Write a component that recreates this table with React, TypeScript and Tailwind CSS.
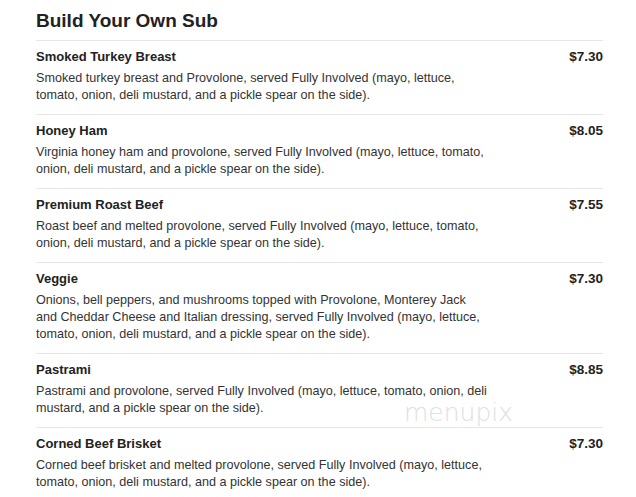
const items = [
  {
    name: "Smoked Turkey Breast",
    price: "$7.30",
    desc: "Smoked turkey breast and Provolone, served Fully Involved (mayo, lettuce, tomato, onion, deli mustard, and a pickle spear on the side).",
  },
  {
    name: "Honey Ham",
    price: "$8.05",
    desc: "Virginia honey ham and provolone, served Fully Involved (mayo, lettuce, tomato, onion, deli mustard, and a pickle spear on the side).",
  },
  {
    name: "Premium Roast Beef",
    price: "$7.55",
    desc: "Roast beef and melted provolone, served Fully Involved (mayo, lettuce, tomato, onion, deli mustard, and a pickle spear on the side).",
  },
  {
    name: "Veggie",
    price: "$7.30",
    desc: "Onions, bell peppers, and mushrooms topped with Provolone, Monterey Jack and Cheddar Cheese and Italian dressing, served Fully Involved (mayo, lettuce, tomato, onion, deli mustard, and a pickle spear on the side).",
  },
  {
    name: "Pastrami",
    price: "$8.85",
    desc: "Pastrami and provolone, served Fully Involved (mayo, lettuce, tomato, onion, deli mustard, and a pickle spear on the side).",
  },
  {
    name: "Corned Beef Brisket",
    price: "$7.30",
    desc: "Corned beef brisket and melted provolone, served Fully Involved (mayo, lettuce, tomato, onion, deli mustard, and a pickle spear on the side).",
  },
];

export default function App() {
  return (
    <div
      className="relative bg-white w-[636px] h-[497px] overflow-hidden pl-[36px] pr-[33px] text-[#333]"
      style={{ fontFamily: '"Liberation Sans", Arial, sans-serif' }}
    >
      <h2 className="pt-[9px] mb-[7px] text-[19px] leading-[24px] font-bold text-[#222]">
        Build Your Own Sub
      </h2>

      {items.map((item) => (
        <div key={item.name} className="border-t border-[#e6e6e6] pt-[8px] pb-[10px]">
          {/* name + price */}
          <div className="flex justify-between items-start">
            <h3 className="text-[13px] leading-[16px] font-bold text-[#222]">{item.name}</h3>
            <span className="text-[13.5px] leading-[16px] font-bold text-[#222]">{item.price}</span>
          </div>
          <p className="mt-[5px] max-w-[452px] text-[12.6px] leading-[17px]">{item.desc}</p>
        </div>
      ))}

      {/* watermark */}
      <div
        className="absolute left-[404px] top-[401px] text-[25px] leading-[24px] text-[#e0e0e0] select-none"
        style={{ fontFamily: '"DejaVu Sans", sans-serif', fontWeight: 200 }}
      >
        menupix
      </div>
    </div>
  );
}
